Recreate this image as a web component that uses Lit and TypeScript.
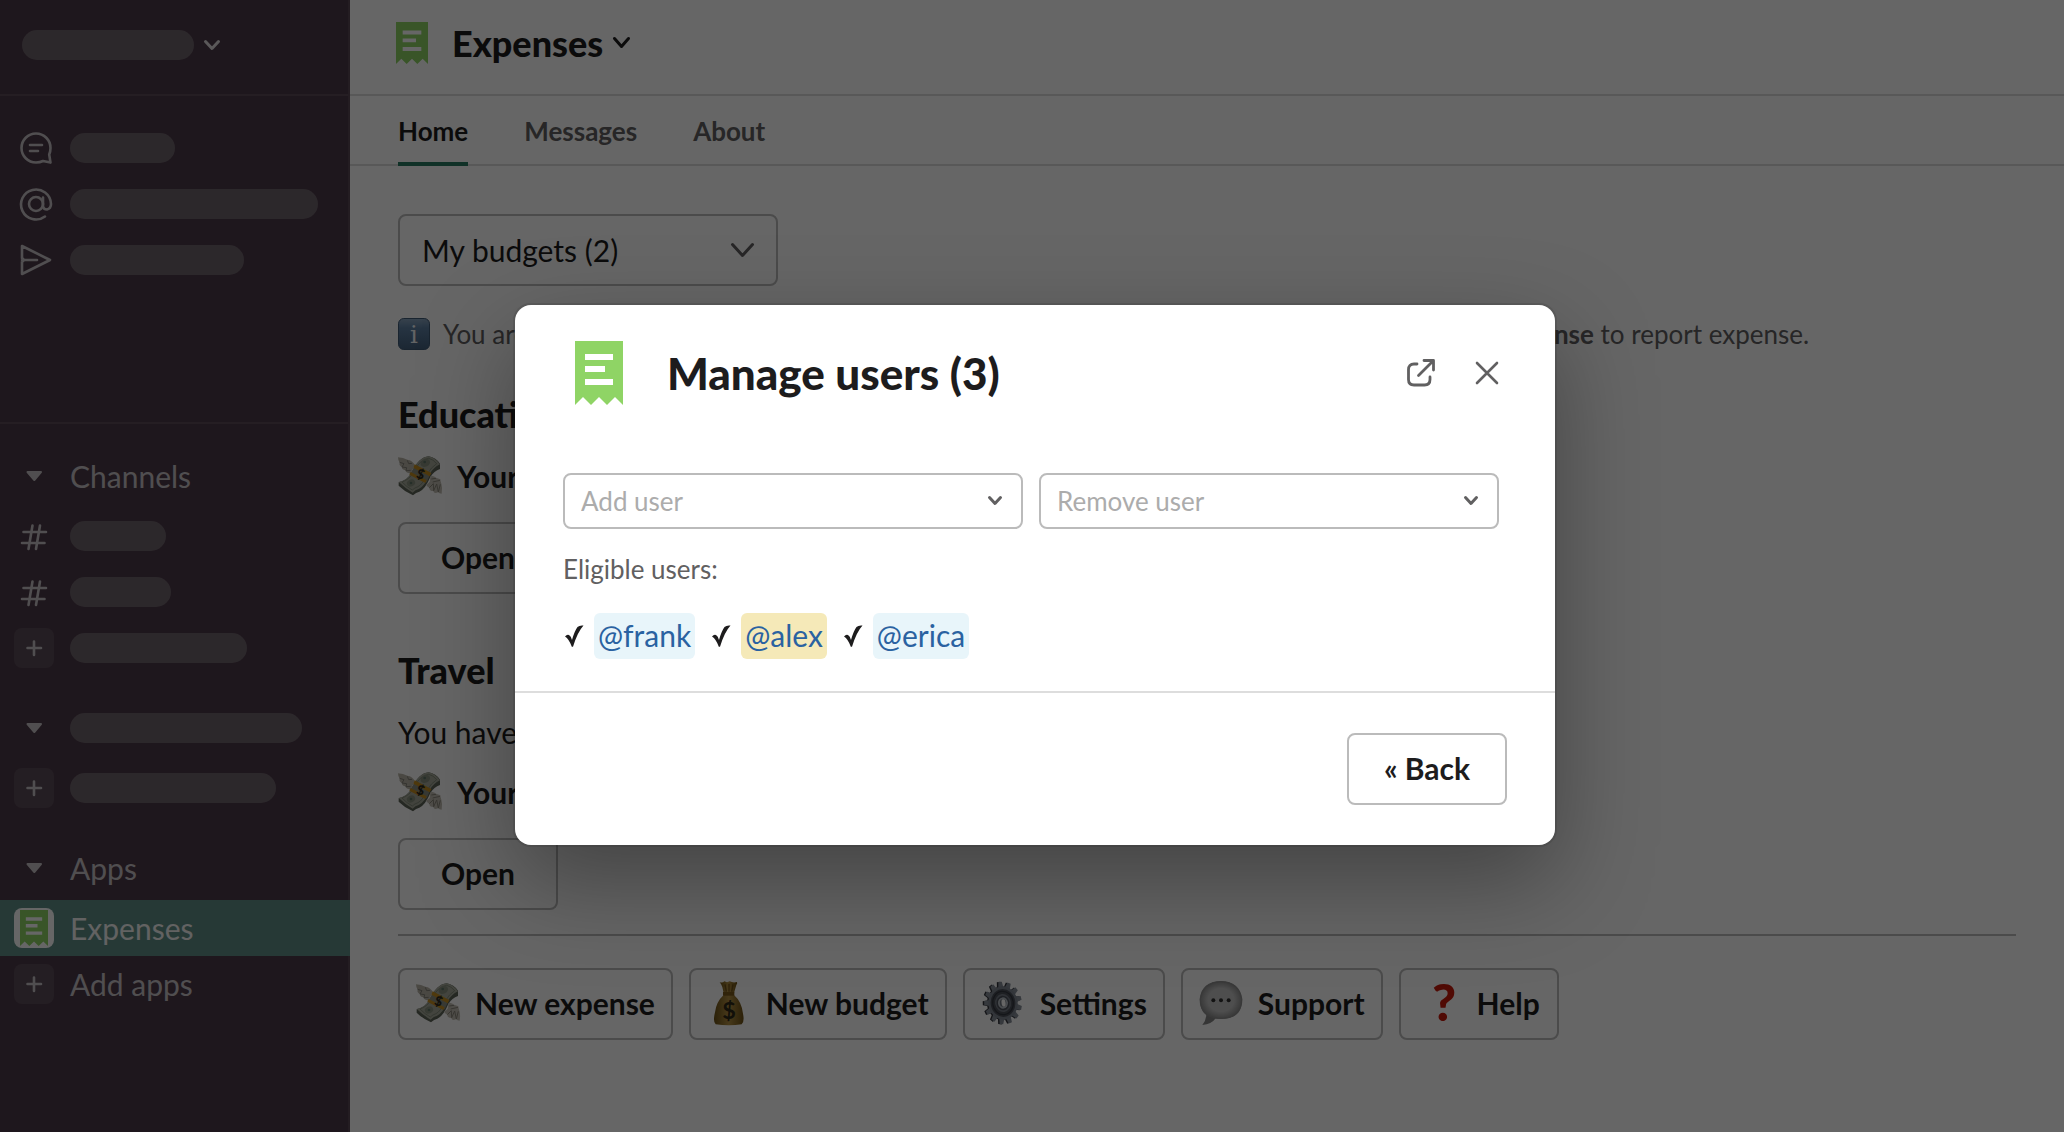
import { LitElement, html, css, svg, nothing } from "lit";
import { customElement, property } from "lit/decorators.js";

const chevron = (w: number, h: number, stroke: number) => html`
  <svg class="chevron" width=${w} height=${h} viewBox="0 0 ${w} ${h}" fill="none" stroke="currentColor"
    stroke-width=${stroke} stroke-linecap="round" stroke-linejoin="round" aria-hidden="true">
    <path d="M${stroke / 2} ${stroke / 2}L${w / 2} ${h - stroke / 2 - 1}L${w - stroke / 2} ${stroke / 2}" />
  </svg>`;

const receipt = (w: number, h: number) => html`
  <svg width=${w} height=${h} viewBox="0 0 48 64" preserveAspectRatio="none" aria-hidden="true">
    <path fill="#8fd465" d="M0 0H48V64L40 56L32 64L24 56L16 64L8 56L0 64Z" />
    <path fill="#fff" d="M10 13H38V19H10ZM10 25H30V31H10ZM10 38H38V44H10Z" />
  </svg>`;

const sideIcons: Record<string, unknown> = {
  threads: svg`<path d="M30.500 16A14.500 14.500 0 1 0 16 30.500Q20 30.500 23 29L30.500 30.600L29.200 22.500Q30.500 19.500 30.500 16Z"/><path d="M10 13H22M10 19H18"/>`,
  mentions: svg`<circle cx="16" cy="16" r="7"/><path d="M23 9.500V18.500Q23.500 21.500 27 21.500Q31 20.500 31 16A15 15 0 1 0 25 28.500"/>`,
  drafts: svg`<path d="M2 14V2L30 16L2 30V18M2 16H17M2 14L4 16L2 18"/>`,
  hash: svg`<path d="M14.500 5.500L10.500 29M22 5.500L18 29M5.500 12H28M4 23H26.500"/>`,
};

const gearTeeth = Array.from({ length: 13 }, (_, i) => (i * 360) / 13);

const emojis: Record<string, unknown> = {
  money: svg`<svg viewBox="0 0 132 132">
    <g transform="translate(0 7)">
      <path fill="#b9b5a8" d="M0 3Q16 4 28 10Q44 12 50 26L38 52Q24 50 22 42Q12 40 11 32Q2 26 5 19Q0 12 0 3Z"/>
      <path fill="none" stroke="#85827a" stroke-width="3" d="M5 18L18 22L12 32L26 34L24 43L38 42M28 12L32 22L42 21"/>
      <path fill="#5d6457" d="M2 78Q28 72 40 50Q62 2 92 0Q114 4 126 22V38Q108 44 97 62Q82 98 64 106Q54 108 45 117Q20 106 2 88Z"/>
      <path fill="#a7ab9c" d="M2 77Q28 72 40 50Q62 2 92 0Q112 4 126 24Q106 34 96 52Q80 90 62 98Q52 100 44 109Q22 96 2 77Z"/>
      <path fill="none" stroke="#737b6b" stroke-width="2" d="M12 77Q34 70 46 48Q66 8 92 6Q106 9 116 22Q98 34 90 50Q74 84 60 91Q50 94 43 101Q26 92 12 77Z"/>
      <ellipse cx="82" cy="20" rx="15" ry="11" fill="#8a9281" transform="rotate(-28 82 20)"/>
      <circle cx="80" cy="17" r="4" fill="#5f7568"/>
      <ellipse cx="39" cy="80" rx="13" ry="10" fill="#8a9281" transform="rotate(-28 39 80)"/>
      <circle cx="39" cy="80" r="4" fill="#5f7568"/>
      <path fill="#8d8f80" d="M54 27L97 52L86 78L36 53Z"/>
      <path fill="#c58f22" d="M50 24L100 50L95 60L46 34ZM38 47L86 72L82 80L34 55Z"/>
      <text x="56" y="66" font-family="Lato, sans-serif" font-weight="900" font-size="40" fill="#2c2a20" transform="rotate(18 62 54)">$</text>
      <path fill="#c3bfb3" d="M97 60Q106 56 114 64L127 69Q127 76 130 82Q134 94 131 112Q124 112 120 108Q108 114 106 104Q94 104 94 94Q84 90 84 84Q90 82 95 76Z"/>
      <path fill="none" stroke="#8b877c" stroke-width="3" d="M100 68L114 66M104 77L126 72M94 94L106 82L107 103L116 83L121 107L127 84"/>
    </g></svg>`,
  bag: svg`<svg viewBox="0 0 132 132">
    <defs><linearGradient id="bag" x1="0" x2="1"><stop offset="0" stop-color="#6b5015"/><stop offset=".5" stop-color="#b39044"/><stop offset="1" stop-color="#6b5015"/></linearGradient></defs>
    <path fill="url(#bag)" d="M38 4Q48 6 52 1Q60 6 68 1Q78 6 90 3Q92 8 88 12L81 36H50L46 18Q44 10 38 4Z"/>
    <path fill="url(#bag)" d="M50 42H81Q104 62 108 98Q113 122 104 130Q66 136 26 130Q17 122 24 94Q28 62 50 42Z"/>
    <path fill="#78571b" d="M48 33H82V44H48Z"/>
    <path stroke="#6e5018" stroke-width="4" fill="none" d="M54 10L58 32M66 8L66 32M78 10L74 32"/>
    <text x="66" y="113" text-anchor="middle" font-family="Lato, sans-serif" font-weight="700" font-size="70" fill="#2d2818">$</text></svg>`,
  gear: svg`<svg viewBox="0 0 132 132">
    <g transform="translate(66 66) rotate(-8) scale(.88 1)">
      ${gearTeeth.map(a => svg`<path fill="#34363d" transform="translate(-5 0) rotate(${a})" d="M-9 -44L-6 -64H6L9 -44Z"/>`)}
      <circle cx="-5" r="50" fill="#34363d"/>
      ${gearTeeth.map(a => svg`<path fill="#878e99" transform="rotate(${a})" d="M-9 -44L-6 -64H6L9 -44Z"/>`)}
      <circle r="50" fill="#7d8490"/><circle r="42" fill="#4c5059"/>
      <circle r="35" fill="none" stroke="#343740" stroke-width="4"/>
      <circle r="27" fill="#747a85"/><circle r="22" fill="#4c515b"/>
      <circle r="17" fill="#b7bdc5"/><circle r="11" fill="#6f7680"/><ellipse cx="2" rx="7" ry="11" fill="#fff"/>
    </g></svg>`,
  bubble: svg`<svg viewBox="0 0 132 132">
    <defs><radialGradient id="bub"><stop offset=".6" stop-color="#c4c4c4"/><stop offset="1" stop-color="#8c8c8c"/></radialGradient></defs>
    <path fill="#858585" d="M22 98Q22 118 10 132Q38 130 50 112Z"/>
    <path fill="url(#bub)" d="M66 0Q122 1 130 54Q130 114 66 114Q2 114 2 54Q8 1 66 0Z"/>
    <path fill="none" stroke="#8e8e8e" stroke-width="3" d="M66 2Q120 3 128 54Q128 112 66 112Q4 112 4 54Q10 3 66 2Z"/>
    <g fill="#303030"><circle cx="43" cy="58" r="6"/><circle cx="66" cy="58" r="6"/><circle cx="89" cy="58" r="6"/></g></svg>`,
  question: svg`<svg viewBox="0 0 132 132"><text x="78" y="121" text-anchor="middle" font-family="Lato, sans-serif" font-weight="900" font-size="156" fill="#c81a0b">?</text></svg>`,
  info: svg`<svg viewBox="0 0 96 96">
    <defs><linearGradient id="inf" x1="0" x2="0" y1="0" y2="1"><stop offset="0" stop-color="#8ba6c0"/><stop offset=".3" stop-color="#5f82a5"/><stop offset="1" stop-color="#45617f"/></linearGradient></defs>
    <rect x="1.500" y="1.500" width="93" height="93" rx="16" fill="url(#inf)" stroke="#3f5a77" stroke-width="3"/>
    <text x="48" y="76" text-anchor="middle" font-family="'DejaVu Serif', serif" font-size="74" fill="#f4f7fa">i</text></svg>`,
};

const reset = css`
  * { box-sizing: border-box; }
  a { color: inherit; text-decoration: none; }
  button, select { font: inherit; color: inherit; background: none; margin: 0; cursor: pointer; }
  svg { display: block; flex: none; overflow: visible; }
  h1, h2, p, ul { margin: 0; padding: 0; font-weight: inherit; font-size: inherit; }
`;

const buttonStyles = css`
  .btn {
    display: inline-flex; align-items: center; justify-content: center; gap: 15px;
    height: 72px; min-width: 160px; padding: 0 16px 2px;
    border: 2px solid #bbb; border-radius: 8px;
    font-size: 30px; font-weight: 700; color: #1d1c1d; white-space: nowrap;
  }
`;

const selectStyles = css`
  .select { position: relative; display: flex; align-items: center; }
  .select select {
    appearance: none; width: 100%; border: 2px solid #bbb; border-radius: 8px;
  }
  .select .chevron { position: absolute; right: 21px; pointer-events: none; color: #616061; }
`;

interface SideItem { icon: string; label?: string; width?: number; active?: boolean; header?: boolean; }

const quickLinks: SideItem[] = [
  { icon: "threads", width: 105 },
  { icon: "mentions", width: 248 },
  { icon: "drafts", width: 174 },
];
const sections: SideItem[][] = [
  [
    { icon: "caret", label: "Channels", header: true },
    { icon: "hash", width: 96 },
    { icon: "hash", width: 101 },
    { icon: "plus", width: 177 },
  ],
  [
    { icon: "caret", width: 232, header: true },
    { icon: "plus", width: 206 },
  ],
  [
    { icon: "caret", label: "Apps", header: true },
    { icon: "app", label: "Expenses", active: true },
    { icon: "plus", label: "Add apps" },
  ],
];

@customElement("side-bar")
class SideBar extends LitElement {
  static styles = [reset, css`
    :host { display: block; background: #4d3a49; border-right: 2px solid #5a4956; color: #c8c4c7; }
    .top { display: flex; align-items: center; gap: 10px; height: 96px; padding: 0 22px 4px; border-bottom: 2px solid #5c4c58; }
    .top .chevron { color: #e0dcdf; }
    .pill { display: block; height: 30px; border-radius: 15px; background: #6f656d; }
    .quick { padding: 24px 0 134px; border-bottom: 2px solid #5c4c58; }
    .sections { display: flex; flex-direction: column; gap: 24px; padding-top: 24px; }
    .row { display: flex; align-items: center; gap: 16px; height: 56px; padding-left: 14px; font-size: 30px; }
    .header { margin-bottom: 4px; }
    .active { background: #5f8f87; color: #f4f4f4; margin-right: -2px; }
    .icon { display: grid; place-items: center; width: 40px; height: 40px; border-radius: 8px; }
    .line { padding-left: 4px; }
    .plus { background: #5b4c58; }
    .app { background: #fff; }
  `];

  icon(name: string) {
    if (name === "app") return html`<span class="icon app">${receipt(28, 36)}</span>`;
    if (name === "plus") return html`<span class="icon plus"><svg width="16" height="16" viewBox="0 0 16 16" stroke="currentColor" stroke-width="2.600" stroke-linecap="round"><path d="M8 1.500V15M1.500 8H15"/></svg></span>`;
    if (name === "caret") return html`<span class="icon"><svg width="16" height="12" viewBox="0 0 16 12" fill="currentColor" stroke="currentColor" stroke-linejoin="round" stroke-width="2"><path d="M1.500 2H15L8.300 10Z"/></svg></span>`;
    return html`<span class="icon ${name === "hash" ? "" : "line"}"><svg width="32" height="32" viewBox="0 0 32 32" fill="none" stroke="currentColor" stroke-width="2.600" stroke-linecap="round" stroke-linejoin="round">${sideIcons[name]}</svg></span>`;
  }

  row(item: SideItem) {
    return html`<a href="#" class="row ${item.header ? "header" : ""} ${item.active ? "active" : ""}">
      ${this.icon(item.icon)}
      ${item.label ? html`<span>${item.label}</span>` : html`<span class="pill" style="width:${item.width}px"></span>`}
    </a>`;
  }

  render() {
    return html`
      <div class="top"><span class="pill" style="width:172px"></span>${chevron(16, 11, 3)}</div>
      <nav class="quick">${quickLinks.map(i => this.row(i))}</nav>
      <nav class="sections">${sections.map(s => html`<div>${s.map(i => this.row(i))}</div>`)}</nav>`;
  }
}

interface Budget { name: string; note?: string; status: string; }

const budgets: Budget[] = [
  { name: "Education", status: "Your balance" },
  { name: "Travel", note: "You have 1 expense", status: "Your balance" },
];
const actions = [
  { icon: "money", label: "New expense" },
  { icon: "bag", label: "New budget" },
  { icon: "gear", label: "Settings" },
  { icon: "bubble", label: "Support" },
  { icon: "question", label: "Help" },
];

@customElement("app-home")
class AppHome extends LitElement {
  static styles = [reset, buttonStyles, selectStyles, css`
    :host { display: block; min-width: 0; background: #fff; color: #1d1c1d; }
    .title { display: flex; align-items: center; height: 96px; padding: 0 46px 8px; border-bottom: 2px solid #ddd; }
    h1 { margin: 0 10px 0 24px; font-size: 36px; font-weight: 900; }
    .tabs { display: flex; gap: 56px; height: 70px; padding: 0 48px; border-bottom: 2px solid #ddd; font-size: 26px; font-weight: 700; color: #616061; }
    .tab { display: flex; align-items: center; height: 70px; border-top: 4px solid transparent; border-bottom: 4px solid transparent; }
    .current { color: #1d1c1d; border-bottom-color: #2a7a62; }
    .content { padding: 48px; }
    .budgets { width: 380px; }
    .budgets select { height: 72px; padding: 0 22px; font-size: 30px; }
    .budgets .chevron { right: 24px; }
    .context { display: flex; align-items: center; gap: 13px; margin-top: 30px; font-size: 26px; line-height: 36px; color: #616061; white-space: nowrap; }
    .budget { margin-top: 40px; font-size: 30px; line-height: 44px; }
    .budget + .budget { margin-top: 54px; }
    h2 { font-size: 36px; font-weight: 900; }
    .note { margin-top: 18px; }
    .status { display: flex; align-items: center; gap: 15px; margin-top: 18px; font-weight: 700; }
    .note + .status { margin-top: 16px; }
    .budget .btn { margin-top: 24px; }
    .emoji svg { width: 44px; height: 44px; }
    .context .emoji svg { width: 32px; height: 32px; }
    .actions { display: flex; gap: 16px; margin-top: 24px; padding-top: 32px; border-top: 2px solid #bbb; }
  `];

  render() {
    return html`
      <header class="title">${receipt(32, 42)}<h1>Expenses</h1>${chevron(17, 12, 3)}</header>
      <nav class="tabs">
        <a class="tab current" href="#">Home</a><a class="tab" href="#">Messages</a><a class="tab" href="#">About</a>
      </nav>
      <div class="content">
        <div class="select budgets">
          <select aria-label="Budgets"><option>My budgets (2)</option></select>${chevron(23, 15, 3)}
        </div>
        <div class="context">
          <span class="emoji">${emojis.info}</span>
          <p>You are eligible to report expenses in the company budgets listed below. Please choose <b>New expense</b> to report expense.</p>
        </div>
        ${budgets.map(b => html`
          <section class="budget">
            <h2>${b.name}</h2>
            ${b.note ? html`<p class="note">${b.note}</p>` : nothing}
            <p class="status"><span class="emoji">${emojis.money}</span>${b.status}</p>
            <button class="btn">Open</button>
          </section>`)}
        <div class="actions">
          ${actions.map(a => html`<button class="btn"><span class="emoji">${emojis[a.icon]}</span>${a.label}</button>`)}
        </div>
      </div>`;
  }
}

@customElement("users-dialog")
class UsersDialog extends LitElement {
  @property({ attribute: false }) users = [
    { name: "@frank", self: false },
    { name: "@alex", self: true },
    { name: "@erica", self: false },
  ];

  static styles = [reset, buttonStyles, selectStyles, css`
    :host {
      display: flow-root; width: 1040px; max-width: 100%; background: #fff; color: #1d1c1d; border-radius: 16px;
      box-shadow: 0 0 0 2px rgba(29, 28, 29, 0.13), 0 36px 96px rgba(0, 0, 0, 0.35);
    }
    .head { display: flex; align-items: center; height: 64px; margin: 36px 47px 0 60px; color: #616061; }
    h1 { flex: 1; margin-left: 44px; font-size: 44px; line-height: 56px; font-weight: 900; color: #1d1c1d; }
    .tool { display: grid; place-items: center; width: 42px; height: 42px; padding: 0; border: 0; }
    .tool + .tool { margin-left: 24px; }
    .body { padding: 68px 56px 32px 48px; }
    .fields { display: grid; grid-template-columns: 1fr 1fr; gap: 16px; }
    .fields select { height: 56px; padding: 0 16px; font-size: 26px; color: #acacac; }
    .label { margin-top: 22px; font-size: 26px; line-height: 36px; color: #616061; }
    .users { display: flex; gap: 15px; margin-top: 26px; list-style: none; font-size: 30px; }
    .user { display: flex; align-items: center; gap: 7px; }
    .chip { padding: 0 4px 2px; line-height: 44px; border-radius: 6px; background: #e8f5fa; color: #2a62a1; }
    .self { background: #f5e9b8; }
    .foot { display: flex; justify-content: flex-end; padding: 40px 48px; border-top: 2px solid #ddd; }
  `];

  field(label: string) {
    return html`<div class="select"><select aria-label=${label}><option>${label}</option></select>${chevron(14, 10, 3)}</div>`;
  }

  render() {
    return html`
      <header class="head">
        ${receipt(48, 64)}
        <h1>Manage users (3)</h1>
        <button class="tool" aria-label="Open in new window">
          <svg width="30" height="30" viewBox="0 0 30 30" fill="none" stroke="currentColor" stroke-width="2.800" stroke-linecap="round" stroke-linejoin="round">
            <path d="M11 6H8Q2.500 6 2.500 11.500V21.500Q2.500 27 8 27H18.500Q24 27 24 21.500V19M12.500 17.500L27.500 2.500M18 2.500H27.500V12"/></svg>
        </button>
        <button class="tool" aria-label="Close">
          <svg width="24" height="24" viewBox="0 0 24 24" stroke="currentColor" stroke-width="2.600" stroke-linecap="round"><path d="M2 2L22 22M22 2L2 22"/></svg>
        </button>
      </header>
      <div class="body">
        <div class="fields">${this.field("Add user")}${this.field("Remove user")}</div>
        <p class="label">Eligible users:</p>
        <ul class="users">
          ${this.users.map(u => html`<li class="user">
            <svg width="24" height="24" viewBox="0 0 24 24" aria-hidden="true"><path fill="#1d1c1d" d="M2 12.500Q4 10 6 11Q8 12 9 16Q11.500 7 14.500 3Q16.500 1 20.500 1.500Q14.500 8 10 22.800L8.800 22.700Q6 15 2 12.500Z"/></svg>
            <a href="#" class="chip ${u.self ? "self" : ""}">${u.name}</a>
          </li>`)}
        </ul>
      </div>
      <footer class="foot"><button class="btn">« Back</button></footer>`;
  }
}

@customElement("app-root")
class AppRoot extends LitElement {
  static styles = [reset, css`
    :host {
      display: grid; grid-template-columns: 350px 1fr; position: relative;
      min-height: 100vh; overflow: hidden; font-family: Lato, "Open Sans", sans-serif;
    }
    .scrim {
      position: absolute; inset: 0; display: flex; align-items: center; justify-content: center;
      padding: 18px 0 0 6px; background: rgba(0, 0, 0, 0.6);
    }
  `];

  render() {
    return html`
      <side-bar></side-bar>
      <app-home></app-home>
      <div class="scrim"><users-dialog role="dialog" aria-modal="true" aria-label="Manage users"></users-dialog></div>`;
  }
}
